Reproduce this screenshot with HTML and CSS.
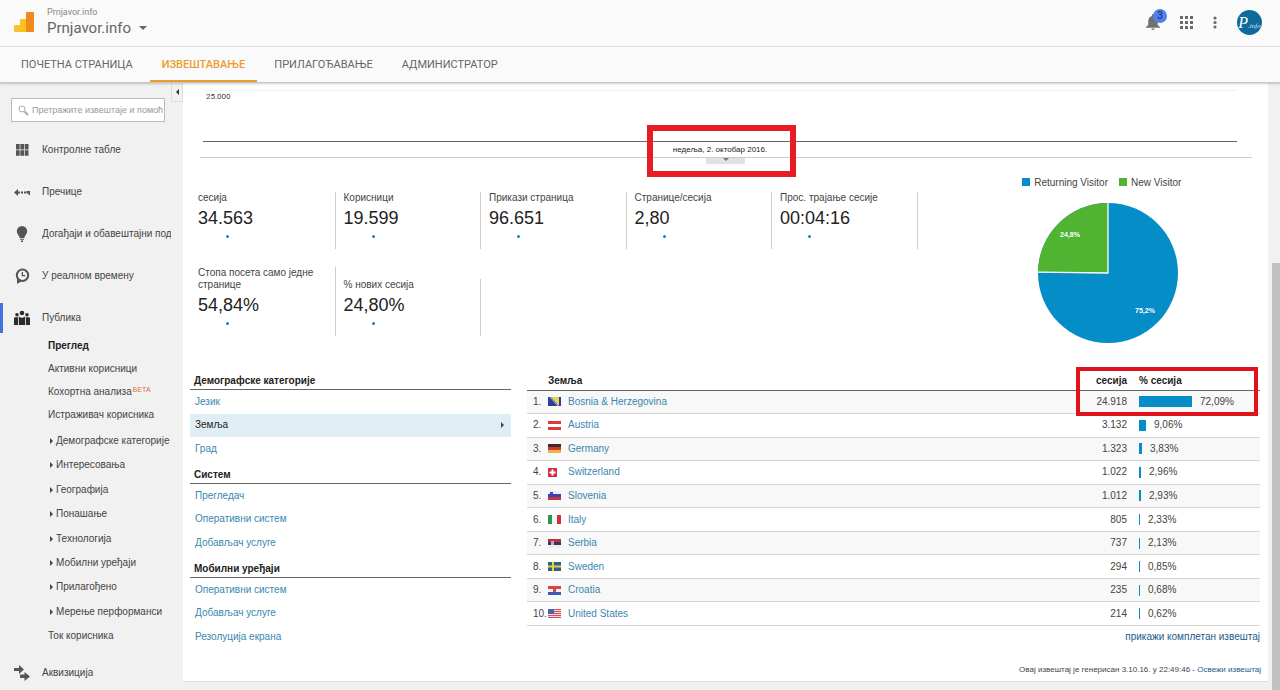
FILE: index.html
```html
<!DOCTYPE html>
<html lang="sr">
<head>
<meta charset="UTF-8">
<meta name="viewport" content="width=device-width, initial-scale=1">
<title>Prnjavor.info - Преглед публике</title>
<link rel="stylesheet" href="styles.css">
</head>
<body>

<header class="topbar">
  <svg class="logo" width="20" height="20" viewBox="0 0 20 20">
    <path d="M0 14a1 1 0 0 1 1-1h6v7H1a1 1 0 0 1-1-1z" fill="#fbc02d"/>
    <path d="M6 8a1 1 0 0 1 1-1h6v13H6z" fill="#fcc21b"/>
    <path d="M12 1a1 1 0 0 1 1-1h6a1 1 0 0 1 1 1v18a1 1 0 0 1-1 1h-7z" fill="#f08a1d"/>
  </svg>
  <div class="account">
    <div class="account-name">Prnjavor.info</div>
    <button class="account-view">Prnjavor.info<span class="caret"></span></button>
  </div>
  <div class="tools">
    <button class="tool bell" aria-label="Обавештења">
      <svg width="14" height="16" viewBox="0 0 14 16" fill="#707070">
        <path d="M7 0a1 1 0 0 0-1 1v1C3.600 2.500 2.300 4.500 2.300 7v4L0 13v.7h14V13l-2.300-2V7c0-2.500-1.300-4.500-3.700-5V1a1 1 0 0 0-1-1z"/>
        <path d="M5.500 14.500h3a1.500 1.500 0 0 1-3 0z"/>
      </svg>
      <span class="badge">3</span>
    </button>
    <button class="tool" aria-label="Апликације">
      <svg width="13" height="13" viewBox="0 0 13 13" fill="#6a6a6a">
        <path d="M0 0h3v3H0zM5 0h3v3H5zM10 0h3v3h-3zM0 5h3v3H0zM5 5h3v3H5zM10 5h3v3h-3zM0 10h3v3H0zM5 10h3v3H5zM10 10h3v3h-3z"/>
      </svg>
    </button>
    <button class="tool" aria-label="Још">
      <svg width="4" height="13" viewBox="0 0 4 13" fill="#6a6a6a">
        <circle cx="2" cy="2" r="1.600"/><circle cx="2" cy="6.500" r="1.600"/><circle cx="2" cy="11" r="1.600"/>
      </svg>
    </button>
    <button class="avatar" aria-label="Налог"><span class="avatar-p">P</span><span>.info</span></button>
  </div>
</header>

<nav class="tabs">
  <a href="#">ПОЧЕТНА СТРАНИЦА</a>
  <a href="#" class="active">ИЗВЕШТАВАЊЕ</a>
  <a href="#">ПРИЛАГОЂАВАЊЕ</a>
  <a href="#">АДМИНИСТРАТОР</a>
</nav>

<div class="layout">
  <aside class="sidebar">
    <button class="collapse" aria-label="Сакриј мени"><span class="tri-left"></span></button>
    <label class="search">
      <svg width="11" height="11" viewBox="0 0 11 11" fill="none" stroke="#aaa">
        <circle cx="4" cy="4" r="3"/><path d="M6.500 6.500L10 10" stroke-width="2"/>
      </svg>
      <input type="text" placeholder="Претражите извештаје и помоћ" aria-label="Претрага">
    </label>

    <ul class="menu">
      <li><a href="#">
        <svg class="icon" width="16" height="16" viewBox="0 0 16 16" fill="#555"><path d="M2 2h3.700v5.500H2zM6.400 2h3.700v5.500H6.400zM10.800 2h3.700v5.500h-3.700zM2 8.200h3.700v5.500H2zM6.400 8.200h3.700v5.500H6.400zM10.800 8.200h3.700v5.500h-3.700z"/></svg>
        <span>Контролне табле</span></a></li>
      <li><a href="#">
        <svg class="icon" width="16" height="16" viewBox="0 0 16 16" fill="#555"><path d="M0 8.500L4 5v2.500h2v2H4V12zM7 7.500h2v2H7zM10 7.500h2v2h-2zM12.500 7h3.500v4h-1.500V9.500h-2z"/></svg>
        <span>Пречице</span></a></li>
      <li><a href="#">
        <svg class="icon" width="16" height="16" viewBox="0 0 16 16" fill="#555"><path d="M8 0a5.200 5.200 0 0 0-5.200 5.200C2.800 8 5 9 5.700 12h4.600C11 9 13.200 8 13.200 5.200A5.200 5.200 0 0 0 8 0zM6 12.700h4v1H6zM7 14.400h2V16H7z"/></svg>
        <span>Догађаји и обавештајни подаци</span></a></li>
      <li><a href="#">
        <svg class="icon" width="16" height="16" viewBox="0 0 16 16"><circle cx="8.500" cy="7.300" r="5.700" fill="none" stroke="#555" stroke-width="2"/><path d="M8.300 4v3.700h3" fill="none" stroke="#555" stroke-width="1.300"/><path d="M3 10v6L8 13z" fill="#555"/></svg>
        <span>У реалном времену</span></a></li>
      <li class="current"><a href="#">
        <svg class="icon" width="16" height="16" viewBox="0 0 16 16" fill="#2b2b2b"><circle cx="8" cy="3" r="2.300"/><circle cx="3" cy="4.800" r="1.800"/><circle cx="13" cy="4.800" r="1.800"/><path d="M4.800 6.500l3.200 1.500 3.200-1.500V15H4.800zM0 8.500q0-1.200 1-1.200h3V15H0zM12 7.300h3q1 0 1 1.200V15h-4z"/></svg>
        <span>Публика</span></a></li>
    </ul>
    <ul class="submenu">
      <li class="selected"><a href="#">Преглед</a></li>
      <li><a href="#">Активни корисници</a></li>
      <li><a href="#">Кохортна анализа<sup>БЕТА</sup></a></li>
      <li><a href="#">Истраживач корисника</a></li>
    </ul>
    <ul class="submenu expandable">
      <li><a href="#">Демографске категорије</a></li>
      <li><a href="#">Интересовања</a></li>
      <li><a href="#">Географија</a></li>
      <li><a href="#">Понашање</a></li>
      <li><a href="#">Технологија</a></li>
      <li><a href="#">Мобилни уређаји</a></li>
      <li><a href="#">Прилагођено</a></li>
      <li><a href="#">Мерење перформанси</a></li>
    </ul>
    <ul class="submenu">
      <li><a href="#">Ток корисника</a></li>
    </ul>
    <ul class="menu menu-bottom">
      <li><a href="#">
        <svg class="icon" width="16" height="16" viewBox="0 0 16 16" fill="#555"><path d="M0 3h5V0l5 4.500L5 9V6H0zM6 9.500h4.500V7l5.500 4.500-5.500 4.500v-3H6z"/></svg>
        <span>Аквизиција</span></a></li>
    </ul>
  </aside>

  <main class="report">
    <section class="chart">
      <div class="plot">25.000</div>
      <div class="chart-date">недеља, 2. октобар 2016.</div>
      <button class="handle" aria-label="Прикажи белешке"><span class="tri-down"></span></button>
      <div class="mark mark-date"></div>
    </section>

    <section class="overview">
      <div class="metrics">
        <div class="metric"><div class="label">сесија</div><div class="value">34.563</div><i class="dot"></i></div>
        <div class="metric"><div class="label">Корисници</div><div class="value">19.599</div><i class="dot"></i></div>
        <div class="metric"><div class="label">Прикази страница</div><div class="value">96.651</div><i class="dot"></i></div>
        <div class="metric"><div class="label">Странице/сесија</div><div class="value">2,80</div><i class="dot"></i></div>
        <div class="metric"><div class="label">Прос. трајање сесије</div><div class="value">00:04:16</div><i class="dot"></i></div>
        <div class="metric"><div class="label">Стопа посета само једне странице</div><div class="value">54,84%</div><i class="dot"></i></div>
        <div class="metric"><div class="label">% нових сесија</div><div class="value">24,80%</div><i class="dot"></i></div>
      </div>
      <div class="visitors">
        <div class="legend">
          <span class="key key-returning">Returning Visitor</span>
          <span class="key key-new">New Visitor</span>
        </div>
        <svg class="pie" width="140" height="140" viewBox="0 0 140 140">
          <circle cx="70" cy="70" r="70" fill="#058dc7"/>
          <path d="M70 70V0A70 70 0 0 0 0 69.100z" fill="#50b432"/>
          <path d="M70 0V70L0 69.100" fill="none" stroke="#fff" stroke-width="1.300"/>
          <text x="32" y="34">24,8%</text>
          <text x="107" y="110">75,2%</text>
        </svg>
      </div>
    </section>

    <section class="details">
      <div class="dimensions">
        <h3>Демографске категорије</h3>
        <ul>
          <li><a href="#">Језик</a></li>
          <li class="selected"><a href="#">Земља</a><span class="tri-right"></span></li>
          <li><a href="#">Град</a></li>
        </ul>
        <h3>Систем</h3>
        <ul>
          <li><a href="#">Прегледач</a></li>
          <li><a href="#">Оперативни систем</a></li>
          <li><a href="#">Добављач услуге</a></li>
        </ul>
        <h3>Мобилни уређаји</h3>
        <ul>
          <li><a href="#">Оперативни систем</a></li>
          <li><a href="#">Добављач услуге</a></li>
          <li><a href="#">Резолуција екрана</a></li>
        </ul>
      </div>

      <div class="countries">
        <table>
          <thead>
            <tr><th class="rank"></th><th class="flag"></th><th class="name">Земља</th><th class="num">сесија</th><th class="share">% сесија</th></tr>
          </thead>
          <tbody>
            <tr><td class="rank">1.</td><td class="flag"><svg width="13" height="9" viewBox="0 0 13 9"><path fill="#2a3f9d" d="M0 0h13v9H0z"/><path fill="#e8d44d" d="M3 0h8v9z"/><path d="M2 0l8 9" stroke="#b9c3e8"/></svg></td><td><a href="#">Bosnia &amp; Herzegovina</a></td><td class="num">24.918</td><td class="share"><div><i class="bar" style="width:53px"></i>72,09%</div></td></tr>
            <tr><td class="rank">2.</td><td class="flag"><svg width="13" height="9" viewBox="0 0 13 9"><path fill="#d93a3a" d="M0 0h13v9H0z"/><path fill="#fff" d="M0 3h13v3H0z"/></svg></td><td><a href="#">Austria</a></td><td class="num">3.132</td><td class="share"><div><i class="bar" style="width:7px"></i>9,06%</div></td></tr>
            <tr><td class="rank">3.</td><td class="flag"><svg width="13" height="9" viewBox="0 0 13 9"><path fill="#3b2b2b" d="M0 0h13v3H0z"/><path fill="#d43a2a" d="M0 3h13v3H0z"/><path fill="#e8b54a" d="M0 6h13v3H0z"/></svg></td><td><a href="#">Germany</a></td><td class="num">1.323</td><td class="share"><div><i class="bar" style="width:3px"></i>3,83%</div></td></tr>
            <tr><td class="rank">4.</td><td class="flag"><svg width="13" height="9" viewBox="0 0 13 9"><path fill="#cf2f3f" d="M0 0h9v9H0z"/><path fill="#fff" d="M3.500 1.500h2v2h2v2h-2v2h-2v-2h-2v-2h2z"/></svg></td><td><a href="#">Switzerland</a></td><td class="num">1.022</td><td class="share"><div><i class="bar" style="width:2px"></i>2,96%</div></td></tr>
            <tr><td class="rank">5.</td><td class="flag"><svg width="13" height="9" viewBox="0 0 13 9"><path fill="#eee" d="M0 0h13v3H0z"/><path fill="#3345b5" d="M0 3h13v3H0z"/><path fill="#cf2f3f" d="M0 6h13v3H0z"/><path fill="#3345b5" d="M2 1h3v3H2z"/></svg></td><td><a href="#">Slovenia</a></td><td class="num">1.012</td><td class="share"><div><i class="bar" style="width:2px"></i>2,93%</div></td></tr>
            <tr><td class="rank">6.</td><td class="flag"><svg width="13" height="9" viewBox="0 0 13 9"><path fill="#2a9a4a" d="M0 0h4v9H0z"/><path fill="#f4f4f4" d="M4 0h5v9H4z"/><path fill="#cf2f3f" d="M9 0h4v9H9z"/></svg></td><td><a href="#">Italy</a></td><td class="num">805</td><td class="share"><div><i class="bar" style="width:1px"></i>2,33%</div></td></tr>
            <tr><td class="rank">7.</td><td class="flag"><svg width="13" height="9" viewBox="0 0 13 9"><path fill="#b93340" d="M0 0h13v3H0z"/><path fill="#2f3a66" d="M0 3h13v3H0z"/><path fill="#eee" d="M0 6h13v3H0z"/><path fill="#d9a0a0" d="M3 2h3v4H3z"/></svg></td><td><a href="#">Serbia</a></td><td class="num">737</td><td class="share"><div><i class="bar" style="width:1px"></i>2,13%</div></td></tr>
            <tr><td class="rank">8.</td><td class="flag"><svg width="13" height="9" viewBox="0 0 13 9"><path fill="#2f5f88" d="M0 0h13v9H0z"/><path fill="#e6d43c" d="M4 0h2v9H4zM0 3.500h13v2H0z"/></svg></td><td><a href="#">Sweden</a></td><td class="num">294</td><td class="share"><div><i class="bar" style="width:1px"></i>0,85%</div></td></tr>
            <tr><td class="rank">9.</td><td class="flag"><svg width="13" height="9" viewBox="0 0 13 9"><path fill="#d9444a" d="M0 0h13v3H0z"/><path fill="#f0f0f0" d="M0 3h13v3H0z"/><path fill="#3c58b0" d="M0 6h13v3H0z"/><path fill="#d9444a" d="M5 2h3v4H5z"/></svg></td><td><a href="#">Croatia</a></td><td class="num">235</td><td class="share"><div><i class="bar" style="width:1px"></i>0,68%</div></td></tr>
            <tr><td class="rank">10.</td><td class="flag"><svg width="13" height="9" viewBox="0 0 13 9"><path fill="#f2dada" d="M0 0h13v9H0z"/><path fill="#d4525a" d="M0 0h13v1H0zM0 2h13v1H0zM0 4h13v1H0zM0 6h13v1H0zM0 8h13v1H0z"/><path fill="#4a62ae" d="M0 0h6v5H0z"/></svg></td><td><a href="#">United States</a></td><td class="num">214</td><td class="share"><div><i class="bar" style="width:1px"></i>0,62%</div></td></tr>
          </tbody>
        </table>
        <a href="#" class="full-report">прикажи комплетан извештај</a>
        <div class="mark mark-country"></div>
      </div>
    </section>

    <footer class="generated">Овај извештај је генерисан 3.10.16. у 22:49:46 - <a href="#">Освежи извештај</a></footer>
  </main>

  <div class="scrollbar"><div class="thumb"></div></div>
</div>

</body>
</html>
```
FILE: styles.css
```css
* {
  box-sizing: border-box;
}
body {
  margin: 0;
  height: 100vh;
  overflow: hidden;
  display: flex;
  flex-direction: column;
  font-family: "Liberation Sans", Arial, sans-serif;
  font-size: 10px;
  line-height: 12px;
  color: #444;
  background: #f1f1f1;
}
a {
  color: inherit;
  text-decoration: none;
}
ul {
  list-style: none;
  margin: 0;
  padding: 0;
}
button {
  border: none;
  background: none;
  padding: 0;
  font: inherit;
  color: inherit;
  cursor: pointer;
}
svg {
  display: block;
}

/* header */
.topbar {
  flex: none;
  display: flex;
  align-items: center;
  height: 47px;
  padding: 0 18px 2px 14px;
  background: #fafafa;
  border-bottom: 1px solid #e0e0e0;
  font-family: Roboto, sans-serif;
  color: #666;
}
.account {
  margin-left: 13px;
}
.account-name {
  font-size: 9px;
  line-height: 12px;
  color: #888;
}
.account-view {
  display: flex;
  align-items: center;
  font-size: 15px;
  line-height: 20px;
}
.caret {
  margin-left: 8px;
  border: 4px solid transparent;
  border-top-color: #666;
  border-bottom: none;
}
.tools {
  margin-left: auto;
  display: flex;
  align-items: center;
}
.tool {
  position: relative;
  margin-right: 20px;
}
.badge {
  position: absolute;
  left: 7px;
  top: -5px;
  width: 14px;
  height: 14px;
  border-radius: 50%;
  background: #4f80ee;
  color: #1a2a55;
  font-size: 10px;
  line-height: 14px;
}
.avatar {
  width: 25px;
  height: 25px;
  border-radius: 50%;
  background: #0d6a9a;
  color: #cfe6f0;
  font: italic 7px/25px "Liberation Serif", serif;
  overflow: hidden;
  white-space: nowrap;
}
.avatar-p {
  font-size: 16px;
  color: #fff;
}
.tabs {
  flex: none;
  position: relative;
  z-index: 1;
  display: flex;
  height: 36px;
  padding-left: 9px;
  background: #fafafa;
  border-bottom: 1px solid #c8c8c8;
  box-shadow: 0 1px 2px rgba(0,0,0,0.2);
  font-family: Roboto, sans-serif;
  font-size: 11px;
  line-height: 35px;
  color: #666;
}
.tabs a {
  padding: 0 12px;
  margin-right: 5px;
}
.tabs .active {
  color: #ec9c2c;
  font-weight: 500;
  border-bottom: 2px solid #ec9c2c;
}

/* left menu */
.layout {
  flex: 1;
  min-height: 0;
  display: flex;
}
.sidebar {
  position: relative;
  flex: none;
  width: 183px;
  padding-top: 15px;
  background: #f1f1f1;
}
.collapse {
  position: absolute;
  right: 0;
  top: 0;
  width: 12px;
  height: 19px;
  border: 1px solid #ddd;
  border-top: none;
  display: flex;
  align-items: center;
  justify-content: center;
}
.tri-left {
  border: 3px solid transparent;
  border-right-color: #333;
  border-left: none;
}
.tri-down {
  border: 3px solid transparent;
  border-top-color: #777;
  border-bottom: none;
}
.tri-right {
  border: 3px solid transparent;
  border-left-color: #444;
  border-right: none;
}
.search {
  display: flex;
  align-items: center;
  height: 24px;
  margin: 0 18px 7px 11px;
  padding-left: 6px;
  border: 1px solid #bbb;
  background: #fff;
}
.search svg {
  flex: none;
}
.search input {
  flex: 1;
  min-width: 0;
  margin-left: 3px;
  padding: 0;
  border: none;
  outline: none;
  background: none;
  font: inherit;
  font-size: 9px;
}
.search input::placeholder {
  color: #999;
}
.menu a {
  display: flex;
  align-items: center;
  height: 42px;
  padding: 0 12px 0 14px;
}
.menu .icon {
  flex: none;
  margin-right: 12px;
}
.menu span {
  overflow: hidden;
  white-space: nowrap;
}
.menu .current {
  background: linear-gradient(#4272db, #4272db) 0 6px / 3px 30px no-repeat;
}
.menu-bottom {
  margin-top: 5px;
}
.submenu {
  padding-left: 48px;
  white-space: nowrap;
}
.submenu a {
  line-height: 23px;
}
.menu + .submenu {
  margin-top: -5px;
  margin-bottom: 3px;
}
.submenu .selected {
  font-weight: bold;
  color: #222;
}
.submenu sup {
  margin-left: 1px;
  font-size: 7px;
  line-height: 0;
  vertical-align: 3px;
  color: #e0693a;
}
.expandable {
  display: grid;
  grid-auto-rows: 1fr;
  min-height: 195px;
}
.expandable a::before {
  content: "";
  display: inline-block;
  margin: 0 3px 0 2px;
  border: 3px solid transparent;
  border-left-color: #444;
  border-right: none;
}

/* report */
.report {
  flex: 1;
  min-width: 0;
  height: 599px;
  background: #fff;
  border-bottom: 1px solid #ddd;
}
.chart {
  position: relative;
  height: 75px;
  margin: 0 16px 34px 17px;
  padding-top: 7px;
  border-bottom: 1px solid #ccc;
}
.plot {
  height: 52px;
  margin: 0 15px 0 3px;
  padding: 0 3px;
  border-top: 1px solid #f2f2f2;
  border-bottom: 1px solid #666;
  font-family: Roboto, sans-serif;
  font-size: 8px;
}
.chart-date {
  margin-right: 12px;
  text-align: center;
  font-size: 8px;
  line-height: 15px;
  color: #222;
}
.handle {
  position: absolute;
  left: calc(50% - 20px);
  top: 75px;
  width: 39px;
  height: 6px;
  display: flex;
  justify-content: center;
  background: #e2e2e2;
}
.mark {
  position: absolute;
  pointer-events: none;
}
.mark-date {
  left: calc(50% - 79px);
  top: 42px;
  width: 149px;
  height: 52px;
  border: 6px solid #e81c24;
}
.overview {
  display: grid;
  grid-template-columns: 68% 1fr;
  height: 178px;
  margin: 0 8px 0 7px;
}
.metrics {
  display: grid;
  grid-template-columns: repeat(5, 1fr);
  align-content: start;
  align-items: end;
  row-gap: 18px;
}
.metric {
  padding-left: 8px;
  border-right: 1px solid #ccc;
}
.label {
  margin-bottom: 3px;
}
.value {
  font-size: 18px;
  line-height: 22px;
  color: #222;
}
.dot {
  display: block;
  width: 3px;
  height: 3px;
  margin: 6px 0 11px 28px;
  border-radius: 50%;
  background: #1f7fb5;
}
.visitors {
  display: flex;
  flex-direction: column;
  align-items: center;
  padding-left: 38px;
  margin-top: -15px;
}
.legend {
  display: flex;
  gap: 11px;
  margin-bottom: 14px;
  padding-right: 12px;
}
.key::before {
  content: "";
  display: inline-block;
  width: 8px;
  height: 8px;
  margin-right: 4px;
  background: #058dc7;
}
.key-new::before {
  background: #50b432;
}
.pie text {
  fill: #fff;
  font-size: 7px;
  font-weight: bold;
  text-anchor: middle;
}

.details {
  display: grid;
  grid-template-columns: 30% 1fr;
  column-gap: 16px;
  margin: 0 8px 0 7px;
}
.dimensions h3 {
  height: 20px;
  margin: 0;
  padding: 5px 4px 0;
  border-bottom: 1px solid #666;
  font-size: 10px;
  line-height: 12px;
  color: #222;
}
.dimensions ul {
  display: grid;
  grid-auto-rows: 1fr;
  min-height: 71px;
  margin-bottom: 3px;
}
.dimensions li {
  display: flex;
  align-items: center;
  justify-content: space-between;
  padding: 0 7px 0 5px;
  color: #3a87ad;
}
.dimensions .selected {
  background: #dfeef4;
  color: #222;
}
.countries {
  position: relative;
  text-align: right;
}
table {
  width: 100%;
  height: 256px;
  border-collapse: collapse;
  text-align: left;
}
th, td {
  padding: 0;
  border-bottom: 1px solid #d4d4d4;
}
th {
  height: 20px;
  padding-top: 2px;
  border-color: #666;
  color: #222;
}
tbody tr:nth-child(odd) {
  background: #f8f8f8;
}
td a {
  color: #3a87ad;
}
.rank {
  width: 21px;
  padding-left: 6px;
}
.flag {
  width: 20px;
}
.name {
  text-indent: -20px;
}
.num {
  width: 80px;
  text-align: right;
}
.share {
  width: 133px;
  padding-left: 12px;
}
.share div {
  display: flex;
  align-items: center;
}
.bar {
  height: 11px;
  margin-right: 8px;
  background: #058dc7;
}
.full-report {
  display: block;
  line-height: 22px;
  color: #1d5a8a;
}
.mark-country {
  right: 2px;
  top: -3px;
  width: 182px;
  height: 49px;
  border: 4px solid #e0131c;
}
.generated {
  margin: 12px 7px 0;
  text-align: right;
  font-size: 8px;
}
.generated a {
  color: #1d5a8a;
}

/* page scrollbar */
.scrollbar {
  flex: none;
  width: 12px;
  padding: 180px 0 0 4px;
  background: #f1f1f1;
}
.thumb {
  height: 100%;
  background: #c1c1c1;
}
```
